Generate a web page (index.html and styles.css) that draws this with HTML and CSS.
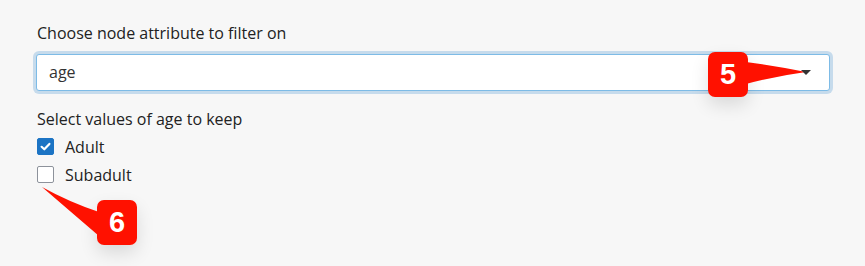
FILE: index.html
```html
<!DOCTYPE html>
<html lang="en">

<head>
    <meta charset="UTF-8">
    <meta name="viewport" content="width=device-width, initial-scale=1.0">
    <title>Filter nodes</title>
    <link rel="stylesheet" href="styles.css">
</head>

<body>
    <main class="filter-panel">
        <div class="field">
            <label class="field-label">Choose node attribute to filter on</label>
            <div class="select-box">
                <span class="select-value">age</span>
                <span class="select-caret"></span>
            </div>
        </div>
        <div class="field">
            <span class="field-label">Select values of age to keep</span>
            <div class="check-list">
                <label class="check-row">
                    <span class="check-box checked">
                        <svg viewBox="0 0 17 17" width="17" height="17">
                            <path d="M4.6 8.8 L7.3 11.3 L12.4 5.9" fill="none" stroke="#fff" stroke-width="2.2" stroke-linecap="round" stroke-linejoin="round" />
                        </svg>
                    </span>
                    <span class="check-text">Adult</span>
                </label>
                <label class="check-row">
                    <span class="check-box"></span>
                    <span class="check-text">Subadult</span>
                </label>
            </div>
        </div>
    </main>

    <!-- callout badges -->
    <div class="callout callout-5">
        <svg class="callout-tail" viewBox="0 0 70 50" width="70" height="50">
            <path d="M0 10 Q30 14 60 20 Q30 24 0 32 Z" fill="#ff1100" />
        </svg>
        <span class="callout-num">5</span>
    </div>
    <div class="callout callout-6">
        <svg class="callout-tail" viewBox="0 0 70 70" width="70" height="70">
            <path d="M1 1 Q28 16 58 26 L58 50 Q30 26 1 1 Z" fill="#ff1100" />
        </svg>
        <span class="callout-num">6</span>
    </div>
</body>

</html>
```

FILE: styles.css
```css
* {
    box-sizing: border-box;
}

body {
    margin: 0;
    padding: 0;
    width: 865px;
    height: 266px;
    background-color: #f7f7f7;
    font-family: "Open Sans", "Noto Sans", sans-serif;
    font-size: 16px;
    color: #222;
    position: relative;
    overflow: hidden;
}

.filter-panel {
    padding: 22px 35px 0 37px;
    display: flex;
    flex-direction: column;
    gap: 17px;
}

.field {
    display: flex;
    flex-direction: column;
}

.field-label {
    line-height: 22px;
    margin-bottom: 10px;
}

.select-box {
    height: 37px;
    width: 794px;
    margin-left: -1px;
    background: #fff;
    border: 1px solid #7dbbe6;
    border-radius: 3px;
    box-shadow: 0 0 0 3px #c6dbec;
    display: flex;
    align-items: center;
    justify-content: space-between;
    padding: 0 18px 0 12px;
}

.select-value {
    color: #333;
    margin-top: -2px;
}

.select-caret {
    width: 0;
    height: 0;
    border-left: 5px solid transparent;
    border-right: 5px solid transparent;
    border-top: 5px solid #333;
    position: relative;
    z-index: 2;
}

.field-label + .check-list {
    margin-top: -2px;
}

.check-list {
    display: flex;
    flex-direction: column;
    gap: 11px;
}

.check-row {
    display: flex;
    align-items: center;
    gap: 11px;
    height: 17px;
}

.check-box {
    width: 17px;
    height: 17px;
    flex-shrink: 0;
    border: 1px solid #8d929b;
    border-radius: 2px;
    background: #fff;
    display: flex;
}

.check-box.checked {
    border-color: #1c74c4;
    background: #1c74c4;
}

.check-box.checked svg {
    margin: -1px;
}

.check-text {
    line-height: 22px;
}

.callout {
    position: absolute;
    width: 40px;
    height: 45px;
    border-radius: 7px;
    background: #ff1100;
    box-shadow: 0 8px 18px rgba(0, 0, 0, 0.12);
    display: flex;
    align-items: center;
    justify-content: center;
}

.callout-num {
    color: #fff;
    font-family: "Liberation Sans", Arial, sans-serif;
    font-weight: bold;
    font-size: 29px;
    position: relative;
}

.callout-tail {
    position: absolute;
}

.callout-5 {
    left: 708px;
    top: 52px;
}

.callout-5 .callout-tail {
    left: 38px;
    top: 0;
}

.callout-6 {
    left: 97px;
    top: 200px;
}

.callout-6 .callout-tail {
    left: -56px;
    top: -14px;
}
```
